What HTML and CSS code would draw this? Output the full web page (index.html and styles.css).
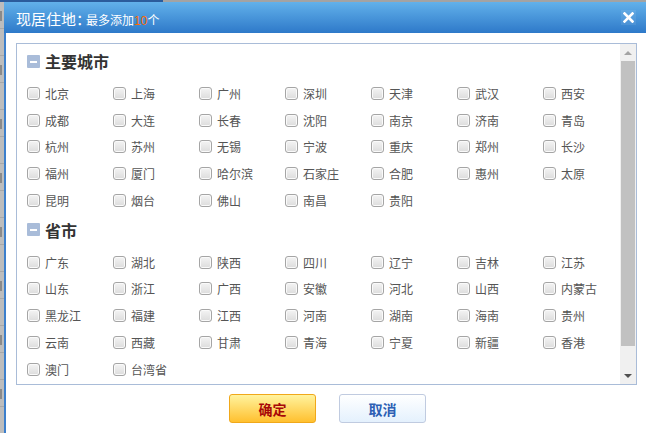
FILE: index.html
```html
<!DOCTYPE html>
<html lang="zh-CN">
<head>
<meta charset="utf-8">
<title>现居住地</title>
<link rel="stylesheet" href="styles.css">
</head>
<body>
<div class="topbar"><div class="topbar-dark"></div></div>
<div class="screen">
  <div class="bg-strip">
    <div class="bg-cell"></div>
    <div class="bg-cell"></div>
    <div class="bg-cell"></div>
    <div class="bg-cell"></div>
    <div class="bg-cell"></div>
    <div class="bg-cell"></div>
    <div class="bg-cell"></div>
    <div class="bg-cell"></div>
    <div class="bg-cell"></div>
    <div class="bg-cell"></div>
    <div class="bg-cell"></div>
    <div class="bg-cell"></div>
    <div class="bg-cell"></div>
    <div class="bg-cell"></div>
    <div class="bg-cell"></div>
    <div class="bg-cell"></div>
  </div>
  <div class="dialog">
    <div class="dlg-head">
      <div class="dlg-title"><span class="t-main">现居住地<span class="colon">：</span></span><span class="t-sub">最多添加<em>10</em>个</span></div>
      <span class="close">
        <svg width="11" height="11" viewBox="0 0 11 11"><path d="M1.5 1.5 L9.5 9.5 M9.5 1.5 L1.5 9.5" stroke="#fff" stroke-width="2.6" stroke-linecap="square"/></svg>
      </span>
    </div>
    <div class="dlg-body">
      <div class="picker">
        <div class="list">
          <div class="sec-head"><span class="sec-icon"></span>主要城市</div>
          <div class="grid">
            <label class="item"><span class="cb"></span>北京</label>
            <label class="item"><span class="cb"></span>上海</label>
            <label class="item"><span class="cb"></span>广州</label>
            <label class="item"><span class="cb"></span>深圳</label>
            <label class="item"><span class="cb"></span>天津</label>
            <label class="item"><span class="cb"></span>武汉</label>
            <label class="item"><span class="cb"></span>西安</label>
            <label class="item"><span class="cb"></span>成都</label>
            <label class="item"><span class="cb"></span>大连</label>
            <label class="item"><span class="cb"></span>长春</label>
            <label class="item"><span class="cb"></span>沈阳</label>
            <label class="item"><span class="cb"></span>南京</label>
            <label class="item"><span class="cb"></span>济南</label>
            <label class="item"><span class="cb"></span>青岛</label>
            <label class="item"><span class="cb"></span>杭州</label>
            <label class="item"><span class="cb"></span>苏州</label>
            <label class="item"><span class="cb"></span>无锡</label>
            <label class="item"><span class="cb"></span>宁波</label>
            <label class="item"><span class="cb"></span>重庆</label>
            <label class="item"><span class="cb"></span>郑州</label>
            <label class="item"><span class="cb"></span>长沙</label>
            <label class="item"><span class="cb"></span>福州</label>
            <label class="item"><span class="cb"></span>厦门</label>
            <label class="item"><span class="cb"></span>哈尔滨</label>
            <label class="item"><span class="cb"></span>石家庄</label>
            <label class="item"><span class="cb"></span>合肥</label>
            <label class="item"><span class="cb"></span>惠州</label>
            <label class="item"><span class="cb"></span>太原</label>
            <label class="item"><span class="cb"></span>昆明</label>
            <label class="item"><span class="cb"></span>烟台</label>
            <label class="item"><span class="cb"></span>佛山</label>
            <label class="item"><span class="cb"></span>南昌</label>
            <label class="item"><span class="cb"></span>贵阳</label>
          </div>
          <div class="sec-head sec-second"><span class="sec-icon"></span>省市</div>
          <div class="grid">
            <label class="item"><span class="cb"></span>广东</label>
            <label class="item"><span class="cb"></span>湖北</label>
            <label class="item"><span class="cb"></span>陕西</label>
            <label class="item"><span class="cb"></span>四川</label>
            <label class="item"><span class="cb"></span>辽宁</label>
            <label class="item"><span class="cb"></span>吉林</label>
            <label class="item"><span class="cb"></span>江苏</label>
            <label class="item"><span class="cb"></span>山东</label>
            <label class="item"><span class="cb"></span>浙江</label>
            <label class="item"><span class="cb"></span>广西</label>
            <label class="item"><span class="cb"></span>安徽</label>
            <label class="item"><span class="cb"></span>河北</label>
            <label class="item"><span class="cb"></span>山西</label>
            <label class="item"><span class="cb"></span>内蒙古</label>
            <label class="item"><span class="cb"></span>黑龙江</label>
            <label class="item"><span class="cb"></span>福建</label>
            <label class="item"><span class="cb"></span>江西</label>
            <label class="item"><span class="cb"></span>河南</label>
            <label class="item"><span class="cb"></span>湖南</label>
            <label class="item"><span class="cb"></span>海南</label>
            <label class="item"><span class="cb"></span>贵州</label>
            <label class="item"><span class="cb"></span>云南</label>
            <label class="item"><span class="cb"></span>西藏</label>
            <label class="item"><span class="cb"></span>甘肃</label>
            <label class="item"><span class="cb"></span>青海</label>
            <label class="item"><span class="cb"></span>宁夏</label>
            <label class="item"><span class="cb"></span>新疆</label>
            <label class="item"><span class="cb"></span>香港</label>
            <label class="item"><span class="cb"></span>澳门</label>
            <label class="item"><span class="cb"></span>台湾省</label>
          </div>
        </div>
        <div class="scrollbar">
          <div class="sb-btn"><span class="tri-up"></span></div>
          <div class="sb-thumb"></div>
          <div class="sb-rest"></div>
          <div class="sb-btn"><span class="tri-down"></span></div>
        </div>
      </div>
      <div class="actions">
        <button class="btn btn-ok">确定</button>
        <button class="btn btn-cancel">取消</button>
      </div>
    </div>
  </div>
</div>
</body>
</html>
```

FILE: styles.css
```css
* { box-sizing: border-box; }
html, body {
  margin: 0;
  padding: 0;
  width: 646px;
  height: 433px;
  overflow: hidden;
  background: #fff;
  font-family: "Noto Sans CJK SC", "Liberation Sans", sans-serif;
}
.topbar {
  height: 2px;
  background: #a3a3a3;
  display: flex;
}
.topbar-dark {
  width: 163px;
  background: #2b5c9c;
}
.screen {
  display: flex;
  height: 431px;
}
.bg-strip {
  width: 4px;
  flex: none;
  background: #bdbdbd;
  overflow: hidden;
  display: flex;
  flex-direction: column;
}
.bg-cell {
  height: 27px;
  flex: none;
  border-bottom: 1px solid #a8a8a8;
  position: relative;
}
.bg-cell:nth-child(odd)::after {
  content: "";
  position: absolute;
  left: 0;
  top: 9px;
  width: 2px;
  height: 10px;
  background: #8a8a8a;
}
.dialog {
  flex: 1;
  min-width: 0;
  display: flex;
  flex-direction: column;
}
.dlg-head {
  height: 31px;
  background: linear-gradient(#62b1ea, #2e79c9);
  display: flex;
  align-items: center;
  justify-content: space-between;
  padding: 2px 10px 0 12px;
  color: #fff;
}
.dlg-title {
  display: flex;
  align-items: baseline;
  white-space: nowrap;
}
.t-main { font-size: 15px; }
.colon { letter-spacing: -5px; }
.t-sub { font-size: 12px; }
.t-sub em {
  font-style: normal;
  color: #ff6a00;
  font-family: "Liberation Sans", sans-serif;
}
.close {
  width: 15px;
  height: 15px;
  display: flex;
  align-items: center;
  justify-content: center;
  background: rgba(255, 255, 255, 0.08);
  margin-top: -2px;
}
.close svg { display: block; }
.dlg-body {
  flex: 1;
  border-left: 2px solid #3c7fcc;
  padding: 10px 9px 0 10px;
}
.picker {
  height: 342px;
  border: 1px solid #a9bcd8;
  display: flex;
  overflow: hidden;
}
.list {
  flex: 1;
  padding: 5px 0 0 10px;
  overflow: hidden;
}
.sec-head {
  height: 24px;
  display: flex;
  align-items: center;
  gap: 5px;
  font-size: 16px;
  font-weight: bold;
  color: #333;
  margin-bottom: 7px;
}
.sec-second { margin-top: 4px; }
.sec-icon {
  width: 13px;
  height: 13px;
  background: #a9bcd9;
  border-radius: 1px;
  position: relative;
  flex: none;
}
.sec-icon::after {
  content: "";
  position: absolute;
  left: 3px;
  top: 6px;
  width: 7px;
  height: 2px;
  background: #fff;
}
.grid {
  display: grid;
  grid-template-columns: repeat(7, 86px);
  grid-auto-rows: 26.75px;
}
.item {
  display: flex;
  align-items: center;
  gap: 5px;
  font-size: 12px;
  color: #555;
  white-space: nowrap;
}
.cb {
  width: 13px;
  height: 13px;
  flex: none;
  border: 1px solid #a5a5a5;
  border-radius: 3px;
  background: linear-gradient(#f4f4f4, #dcdcdc);
  box-shadow: inset 0 0 0 1px #fafafa;
}
.scrollbar {
  width: 16px;
  flex: none;
  background: #f0f0f0;
  display: flex;
  flex-direction: column;
}
.sb-btn {
  height: 17px;
  display: flex;
  align-items: center;
  justify-content: center;
}
.sb-thumb {
  height: 285px;
  margin: 0 1px;
  background: #c1c1c1;
}
.sb-rest { flex: 1; }
.tri-up, .tri-down {
  width: 0;
  height: 0;
  border-left: 4px solid transparent;
  border-right: 4px solid transparent;
}
.tri-up { border-bottom: 4px solid #a3a3a3; }
.tri-down { border-top: 4px solid #505050; margin-top: 1px; }
.actions {
  display: flex;
  justify-content: center;
  gap: 23px;
  padding-top: 9px;
  padding-left: 2px;
}
.btn {
  width: 87px;
  height: 29px;
  border-radius: 3px;
  font-family: "Noto Sans CJK SC", sans-serif;
  font-size: 14px;
  font-weight: bold;
  padding: 0;
  cursor: pointer;
}
.btn-ok {
  background: linear-gradient(#fff39e, #ffc02f);
  border: 1px solid #f0a81a;
  color: #a80808;
}
.btn-cancel {
  background: linear-gradient(#ffffff, #e4f1fd);
  border: 1px solid #c0cbe0;
  color: #2d5fb4;
}
```
